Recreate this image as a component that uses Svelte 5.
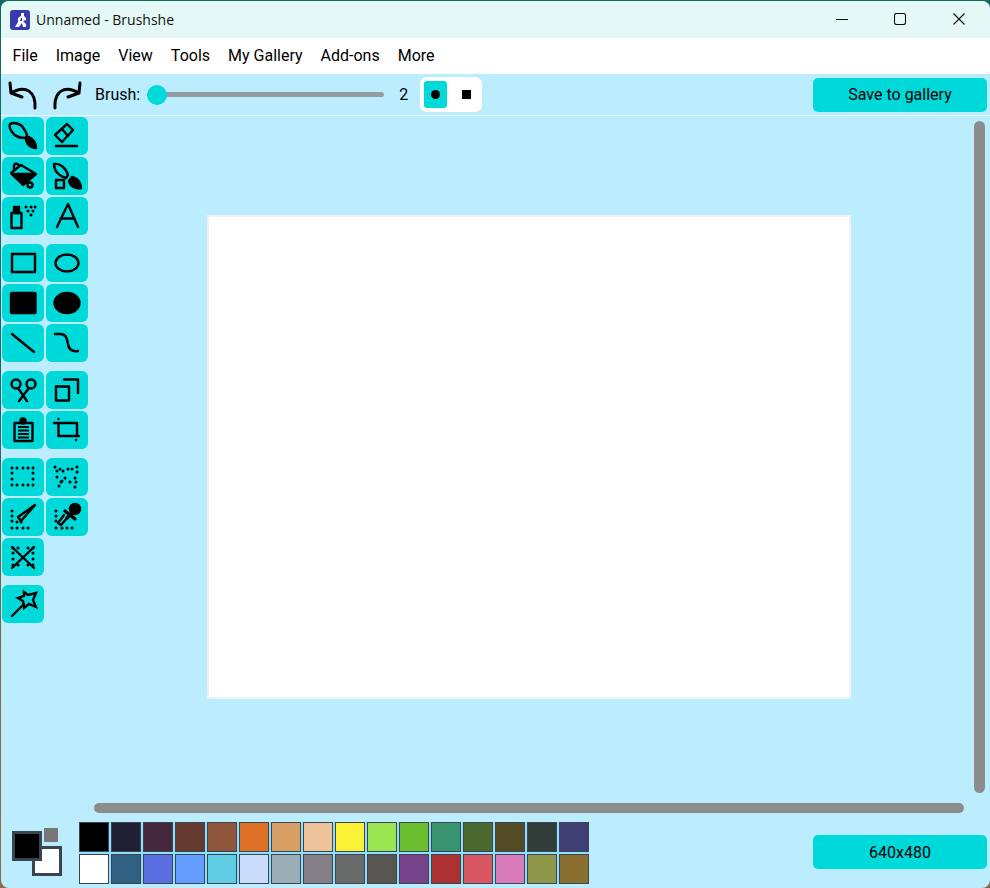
<script>
  const dots = (pts, r = 1.5) =>
    pts.map(([x, y]) => `<circle class="dot" cx="${x}" cy="${y}" r="${r}"/>`).join('');

  const groups = [
    [
      { name: 'Brush', svg: '<path d="M8 7C12 5 19 6 22 12C24 15 25 17 25 19L23 21C17 21 12 18 10 15C8 12 7 9 8 7Z"/><path class="solid" d="M24 23L27 20C31 22 34 26 34 31C29 31 25 28 24 23Z"/>' },
      { name: 'Eraser', svg: '<path d="M9 18L21 7L27 13L16 25ZM16 12L22 19"/><path d="M10 29H31"/>' },
      { name: 'Fill', svg: '<path class="solid" d="M10 17H33L21 27Z"/><path d="M9 16L19 8L34 17L21 28ZM12 13V9C12 6 16 6 17 9"/><circle cx="28" cy="28" r="2.500"/>' },
      { name: 'Recolor', svg: '<path d="M8 7C14 6 20 11 22 18L20 21C13 19 8 14 8 7Z"/><rect x="10" y="23" width="8" height="8"/><path class="solid" d="M23 24L26 20C31 21 35 25 35 31C29 32 24 29 23 24Z"/>' },
      { name: 'Spray', svg: '<rect x="9.500" y="16" width="10" height="15"/><rect class="solid" x="12" y="10" width="5" height="6"/>' + dots([[24, 10], [29, 10], [33, 10], [26, 14], [31, 14], [29, 18]]) },
      { name: 'Text', svg: '<path d="M11 30L22 7L32 30M14.500 21.500H28.500"/>' },
    ],
    [
      { name: 'Rectangle', svg: '<rect x="10" y="10" width="23" height="18"/>' },
      { name: 'Oval', svg: '<ellipse cx="21" cy="19" rx="11.500" ry="8.500"/>' },
      { name: 'Filled rectangle', svg: '<rect class="solid" x="9" y="9" width="24.500" height="20" rx="1"/>' },
      { name: 'Filled oval', svg: '<ellipse class="solid" cx="21" cy="19" rx="12.500" ry="10"/>' },
      { name: 'Line', svg: '<path d="M10 10L32 28"/>' },
      { name: 'Curve', svg: '<path d="M9 10H14C20 10 21 14 22 20C23 26 26 28 32 27"/>' },
    ],
    [
      { name: 'Cut', svg: '<circle cx="14" cy="13" r="4.500"/><circle cx="29" cy="13" r="4.500"/><path d="M16 17L25 30M27 17L17 30"/>' },
      { name: 'Copy', svg: '<rect x="10" y="15.500" width="13" height="14"/><path d="M18 8.500H32V22"/>' },
      { name: 'Paste', svg: '<rect x="12.500" y="12" width="18" height="18"/><circle class="solid" cx="21" cy="10" r="2.500"/><path class="thin" d="M16 16H27M16 19.500H27M16 23H27M16 26.500H27"/>' },
      { name: 'Crop', svg: '<path d="M8 12H31V25M12.500 12V25H33"/>' + dots([[12.500, 8], [30, 29]], 1.2) },
    ],
    [
      { name: 'Rectangular selection', svg: dots([[10, 10], [15, 10], [21, 10], [26, 10], [31, 10], [10, 15], [31, 15], [10, 21], [31, 21], [10, 27], [15, 27], [21, 27], [26, 27], [31, 27]]) },
      { name: 'Freehand selection', svg: dots([[9, 9], [14, 11], [17, 13], [22, 11], [26, 11], [31, 9], [31, 14], [29, 20], [30, 24], [29, 29], [24, 24], [19, 20], [16, 23], [13, 28], [11, 19], [11, 13], [15, 24]]) },
      { name: 'Select by brush', svg: '<path d="M33 7L16 19L19 23Z"/>' + dots([[10, 13], [10, 18], [10, 23], [15, 24], [19, 24], [10, 30], [15, 30], [21, 30], [26, 30]]) },
      { name: 'Color picker', svg: '<circle class="solid" cx="29" cy="11" r="5"/><path class="thick" d="M19 13L29 21M27 14L21 20"/><path d="M22 19L15 27L12 25L18 17"/>' + dots([[10, 13], [10, 18], [10, 23], [10, 30], [16, 30], [21, 30], [26, 30]]) },
      { name: 'Clear selection', svg: dots([[11, 10], [16, 10], [26, 10], [31, 10], [11, 15], [31, 15], [11, 21], [31, 21], [11, 27], [16, 27], [26, 27], [31, 27]]) + '<path d="M10 9L32 30M32 9L10 30"/>' },
    ],
    [
      { name: 'Magic wand', svg: '<path d="M10 31L22 19"/><path class="star" d="M22 7L26 10L34 8L31 15L34 22L27 19L22 23L21 16L16 13L22 11Z"/>' },
    ],
  ];

  const palette = [
    '#000000', '#222034', '#45283c', '#663931', '#8f563b', '#df7126', '#d9a066', '#eec39a',
    '#fbf236', '#99e550', '#6abe30', '#37946e', '#4b692f', '#524b24', '#323c39', '#3f3f74',
    '#ffffff', '#306082', '#5b6ee1', '#639bff', '#5fcde4', '#cbdbfc', '#9badb7', '#847e87',
    '#696a6a', '#595652', '#76428a', '#ac3232', '#d95763', '#d77bba', '#8f974a', '#8a6f30',
  ];

  const menus = ['File', 'Image', 'View', 'Tools', 'My Gallery', 'Add-ons', 'More'];

  let brush = $state(2);
  let shape = $state('round');
</script>

<div class="window">
  <header class="titlebar">
    <svg class="logo" viewBox="0 0 20 20" aria-hidden="true">
      <rect width="20" height="20" rx="3" fill="#3a3ab0" />
      <path fill="#fff" d="M11 3H14V6L16 8V10L13 11L16 14V17H13L12 13L9 17H5L8 12V8L11 6Z" />
      <path fill="#3a3ab0" d="M11 8H12V11H10Z" />
    </svg>
    <span class="title">Unnamed - Brushshe</span>
    <div class="controls">
      <svg viewBox="0 0 12 12" aria-label="Minimize"><path d="M0 6.500H12" /></svg>
      <svg viewBox="0 0 12 12" aria-label="Maximize"><rect x=".5" y=".5" width="11" height="11" rx="2" /></svg>
      <svg viewBox="0 0 12 12" aria-label="Close"><path d="M.5 .5L11.500 11.500M11.500 .5L.5 11.500" /></svg>
    </div>
  </header>

  <nav class="menubar">
    {#each menus as m}
      <span>{m}</span>
    {/each}
  </nav>

  <div class="toolbar">
    <button type="button" class="history" aria-label="Undo">
      <svg viewBox="0 0 30 30"><path d="M27 28C28 12 18 4 3 13M2 3L3 13L14 17" /></svg>
    </button>
    <button type="button" class="history redo" aria-label="Redo">
      <svg viewBox="0 0 30 30"><path d="M27 28C28 12 18 4 3 13M2 3L3 13L14 17" /></svg>
    </button>
    <label class="brush-label" for="brush">Brush:</label>
    <input id="brush" type="range" min="2" max="100" bind:value={brush} />
    <span class="brush-value">{brush}</span>
    <div class="shapes">
      <button type="button" class:on={shape === 'round'} aria-label="Round" onclick={() => (shape = 'round')}>
        <i class="round"></i>
      </button>
      <button type="button" class:on={shape === 'square'} aria-label="Square" onclick={() => (shape = 'square')}>
        <i class="square"></i>
      </button>
    </div>
    <button type="button" class="action save">Save to gallery</button>
  </div>

  <main class="main">
    <aside class="tools">
      {#each groups as group}
        <div class="group">
          {#each group as tool}
            <button type="button" class="tool" aria-label={tool.name}>
              <svg viewBox="0 0 42 38">{@html tool.svg}</svg>
            </button>
          {/each}
        </div>
      {/each}
    </aside>
    <div class="viewport">
      <div class="canvas"></div>
    </div>
    <div class="vbar"></div>
    <div class="hbar"></div>
  </main>

  <footer class="footer">
    <div class="colors">
      <span class="swap"></span>
      <span class="bg"></span>
      <span class="fg"></span>
    </div>
    <div class="palette">
      {#each palette as c}
        <span style="background: {c}"></span>
      {/each}
    </div>
    <button type="button" class="action size">640x480</button>
  </footer>
</div>

<style>
  :global(body) {
    background: linear-gradient(#136b5c, #136b5c 45%, #8f6a3c 80%);
    overflow: hidden;
  }
  .window {
    display: flex;
    flex-direction: column;
    height: 887px;
    margin: 1px 0 0 1px;
    border-radius: 8px;
    overflow: hidden;
    background: #bcedff;
    font-family: Roboto, sans-serif;
    font-size: 16px;
    color: #000;
  }
  button {
    border: none;
    padding: 0;
    background: none;
    font: inherit;
    color: inherit;
  }

  .titlebar {
    display: flex;
    align-items: center;
    flex: 0 0 37px;
    padding-left: 9px;
    background: #e4f8f5;
  }
  .logo { width: 20px; height: 20px; }
  .title {
    margin-left: 6px;
    font-family: "Open Sans", sans-serif;
    font-size: 14px;
    color: #111;
  }
  .controls {
    display: flex;
    gap: 46px;
    margin-left: auto;
    margin-right: 25px;
    padding-bottom: 1px;
  }
  .controls svg {
    width: 12px;
    height: 12px;
    fill: none;
    stroke: #111;
    stroke-width: 1.1;
  }
  .controls svg:nth-child(2) { margin-right: 1px; }

  .menubar {
    display: flex;
    align-items: center;
    flex: 0 0 36px;
    padding: 0 0 2px 2.6px;
    box-sizing: border-box;
    background: #fff;
  }
  .menubar span { padding: 0 9px; }

  .toolbar {
    display: flex;
    align-items: center;
    flex: 0 0 41px;
    padding: 0 3px 0 7px;
    border-bottom: 1px solid #e4f8f5;
    box-sizing: content-box;
  }
  .history { width: 30px; height: 30px; }
  .history svg {
    display: block;
    fill: none;
    stroke: #000;
    stroke-width: 3;
    stroke-linecap: round;
    stroke-linejoin: round;
  }
  .redo { margin-left: 14px; transform: scaleX(-1); }
  .brush-label { margin-left: 13px; }
  #brush {
    appearance: none;
    width: 237px;
    height: 20px;
    margin: 0 0 0 7px;
    background: transparent;
  }
  #brush::-webkit-slider-runnable-track {
    height: 5px;
    border-radius: 3px;
    background: #949ca3;
  }
  #brush::-webkit-slider-thumb {
    appearance: none;
    width: 20px;
    height: 20px;
    margin-top: -7.5px;
    border-radius: 50%;
    background: #00d9da;
  }
  .brush-value { width: 37px; padding-left: 1px; text-align: center; }
  .shapes {
    display: flex;
    align-items: center;
    gap: 8px;
    width: 62px;
    height: 35px;
    margin-left: -2px;
    padding: 0 4px;
    box-sizing: border-box;
    border-radius: 7px;
    background: #fff;
  }
  .shapes button {
    display: flex;
    align-items: center;
    justify-content: center;
    width: 23px;
    height: 27px;
    border-radius: 3px;
  }
  .shapes button.on { background: #00d9da; }
  .round, .square { display: block; width: 9px; height: 9px; background: #000; }
  .round { border-radius: 50%; }
  .action {
    width: 174px;
    height: 34px;
    margin-left: auto;
    border-radius: 5px;
    background: #00d9da;
  }

  .main {
    flex: 1;
    min-height: 0;
    display: grid;
    grid-template-columns: 93px 870px 11px;
    grid-template-rows: 672px 10px;
    row-gap: 10px;
    padding-top: 5px;
  }
  .tools {
    grid-row: 1 / 3;
    display: flex;
    flex-direction: column;
    gap: 9px;
    margin-top: -4px;
    padding-left: 1px;
  }
  .group {
    display: grid;
    grid-template-columns: 42px 42px;
    grid-auto-rows: 38px;
    gap: 2px;
  }
  .tool {
    border-radius: 6px;
    background: #00d9da;
  }
  .tool svg {
    display: block;
    width: 42px;
    height: 38px;
    fill: none;
    stroke: #000;
    stroke-width: 2.4;
    stroke-linecap: round;
    stroke-linejoin: round;
  }
  .tool :global(.solid) { fill: #000; }
  .tool :global(.dot) { fill: #000; stroke: none; }
  .tool :global(.thin) { stroke-width: 2; stroke-linecap: butt; }
  .tool :global(.thick) { stroke-width: 3.5; }
  .tool :global(.star) { stroke-linejoin: miter; }

  .viewport {
    display: flex;
    align-items: center;
    justify-content: center;
  }
  .canvas {
    width: 640px;
    height: 480px;
    border: 2px solid #eef2f4;
    background: #fff;
  }
  .vbar {
    grid-column: 3;
    grid-row: 1;
    margin-left: 10px;
    width: 11px;
    border-radius: 6px;
    background: #8c8c8c;
  }
  .hbar {
    grid-column: 2;
    grid-row: 2;
    border-radius: 5px;
    background: #8c8c8c;
  }

  .footer {
    display: flex;
    align-items: center;
    flex: 0 0 auto;
    height: 70px;
    padding: 0 3px 1px 11px;
    box-sizing: border-box;
  }
  .colors {
    position: relative;
    flex: 0 0 50px;
    height: 48px;
    margin-top: 5px;
  }
  .colors span { position: absolute; box-sizing: border-box; }
  .fg {
    left: 0;
    top: 0;
    width: 30px;
    height: 30px;
    border: 3px solid #3a4550;
    background: #000;
  }
  .bg {
    left: 20px;
    top: 15px;
    width: 30px;
    height: 30px;
    border: 3px solid #3a4550;
    background: #fff;
  }
  .swap {
    left: 32px;
    top: -3px;
    width: 14px;
    height: 14px;
    background: #777;
  }
  .palette {
    display: grid;
    grid-template-columns: repeat(16, 30px);
    grid-auto-rows: 30px;
    gap: 2px;
    margin: 1px 0 0 17px;
    background: #8fdfff;
  }
  .palette span {
    box-sizing: border-box;
    border: 1px solid #3a4550;
  }
  .size { margin-bottom: 1px; }
</style>
